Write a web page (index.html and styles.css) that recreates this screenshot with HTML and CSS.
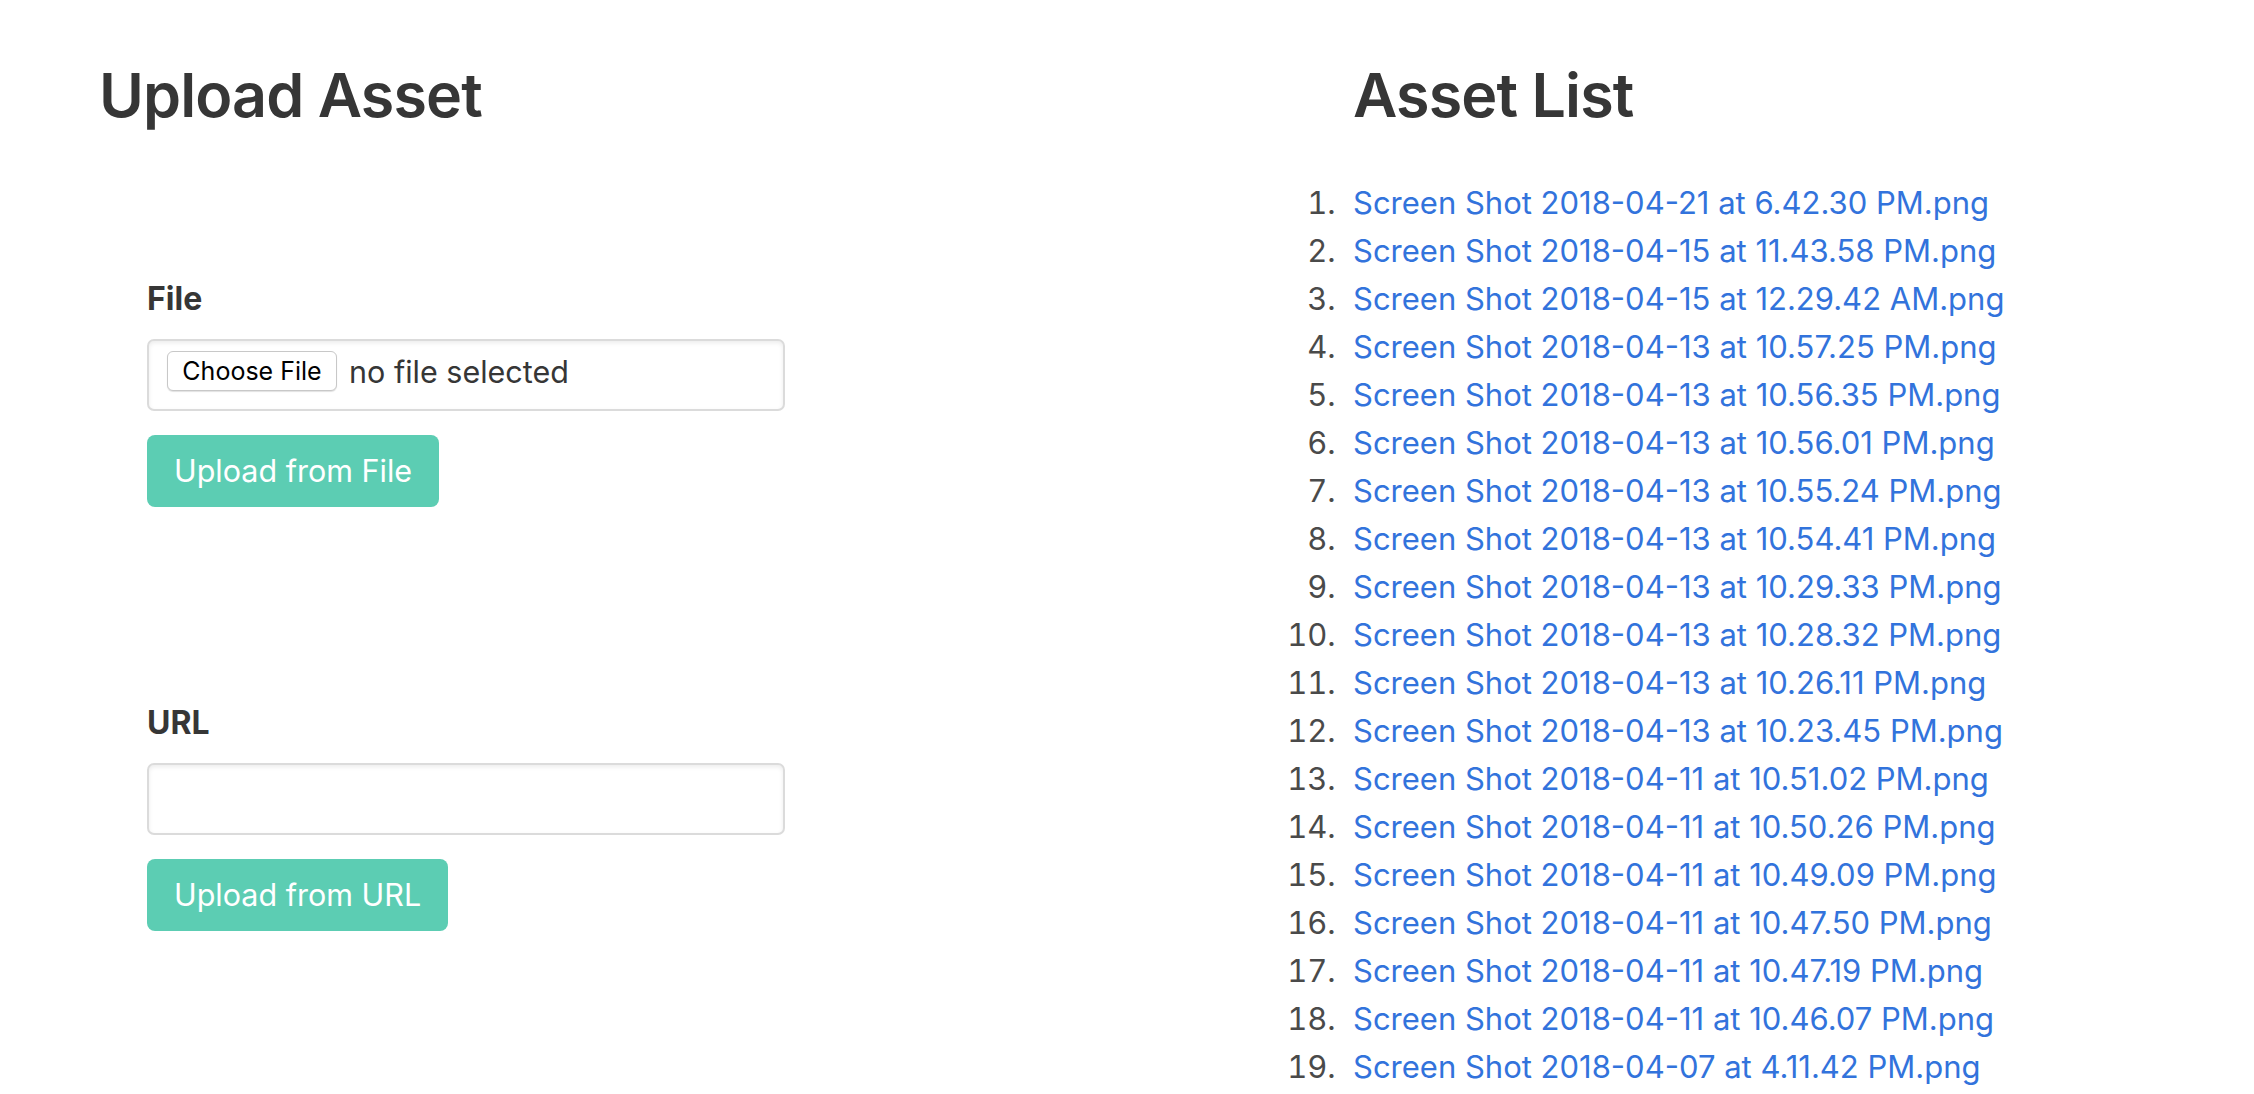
FILE: index.html
```html
<!DOCTYPE html>
<html lang="en">
<head>
<meta charset="utf-8">
<title>Assets</title>
<link rel="stylesheet" href="styles.css">
</head>
<body>
<div class="page">
  <div class="col-left">
    <h1 class="title">Upload Asset</h1>
    <section class="form-section">
      <form>
        <div class="field">
          <label class="label">File</label>
          <div class="file-box"><span class="file-btn">Choose File</span><span class="file-name">no file selected</span></div>
        </div>
        <button type="button" class="btn">Upload from File</button>
      </form>
    </section>
    <section class="form-section">
      <form>
        <div class="field">
          <label class="label">URL</label>
          <input class="input" type="text">
        </div>
        <button type="button" class="btn">Upload from URL</button>
      </form>
    </section>
  </div>
  <div class="col-right">
    <h1 class="title">Asset List</h1>
    <ol class="assets">
      <li><a href="#">Screen Shot 2018-04-21 at 6.42.30 PM.png</a></li>
      <li><a href="#">Screen Shot 2018-04-15 at 11.43.58 PM.png</a></li>
      <li><a href="#">Screen Shot 2018-04-15 at 12.29.42 AM.png</a></li>
      <li><a href="#">Screen Shot 2018-04-13 at 10.57.25 PM.png</a></li>
      <li><a href="#">Screen Shot 2018-04-13 at 10.56.35 PM.png</a></li>
      <li><a href="#">Screen Shot 2018-04-13 at 10.56.01 PM.png</a></li>
      <li><a href="#">Screen Shot 2018-04-13 at 10.55.24 PM.png</a></li>
      <li><a href="#">Screen Shot 2018-04-13 at 10.54.41 PM.png</a></li>
      <li><a href="#">Screen Shot 2018-04-13 at 10.29.33 PM.png</a></li>
      <li><a href="#">Screen Shot 2018-04-13 at 10.28.32 PM.png</a></li>
      <li><a href="#">Screen Shot 2018-04-13 at 10.26.11 PM.png</a></li>
      <li><a href="#">Screen Shot 2018-04-13 at 10.23.45 PM.png</a></li>
      <li><a href="#">Screen Shot 2018-04-11 at 10.51.02 PM.png</a></li>
      <li><a href="#">Screen Shot 2018-04-11 at 10.50.26 PM.png</a></li>
      <li><a href="#">Screen Shot 2018-04-11 at 10.49.09 PM.png</a></li>
      <li><a href="#">Screen Shot 2018-04-11 at 10.47.50 PM.png</a></li>
      <li><a href="#">Screen Shot 2018-04-11 at 10.47.19 PM.png</a></li>
      <li><a href="#">Screen Shot 2018-04-11 at 10.46.07 PM.png</a></li>
      <li><a href="#">Screen Shot 2018-04-07 at 4.11.42 PM.png</a></li>
    </ol>
  </div>
</div>
</body>
</html>
```
FILE: styles.css
```css
html, body {
  margin: 0;
  padding: 0;
  background: #ffffff;
}
body {
  font-family: Inter, "Noto Sans", sans-serif;
  font-size: 31px;
  line-height: 48px;
  color: #4a4a4a;
}
.page {
  display: grid;
  grid-template-columns: 734px 1fr;
  column-gap: 520px;
  padding: 59px 0 0 99px;
}
.title {
  margin: 0 0 48px 0;
  font-size: 61px;
  line-height: 72px;
  font-weight: 600;
  letter-spacing: -0.9px;
  color: #363636;
}
.form-section {
  padding: 96px 48px;
}
.form-section form {
  margin: 0;
}
.field {
  margin-bottom: 24px;
}
.label {
  display: block;
  font-size: 32px;
  font-weight: 700;
  color: #363636;
  margin-bottom: 16px;
}
.file-box,
.input {
  box-sizing: border-box;
  display: flex;
  align-items: center;
  width: 100%;
  height: 72px;
  border: 2px solid #dbdbdb;
  border-radius: 7px;
  box-shadow: inset 0 2px 4px rgba(10, 10, 10, 0.08);
  background: #ffffff;
  padding: 0 18px 6px 18px;
  font-family: inherit;
  font-size: 30.5px;
  color: #363636;
}
.input {
  display: block;
  padding-bottom: 0;
  outline: none;
}
.file-btn {
  box-sizing: border-box;
  display: inline-flex;
  align-items: center;
  justify-content: center;
  height: 40px;
  width: 170px;
  margin-top: -2px;
  border: 1px solid #c8c8c8;
  border-radius: 6px;
  background: #ffffff;
  box-shadow: 0 1px 1px rgba(0, 0, 0, 0.12);
  font-size: 25px;
  line-height: 1;
  color: #000000;
}
.file-name {
  margin-left: 12px;
  color: #363636;
}
.btn {
  box-sizing: border-box;
  height: 72px;
  padding: 0 25px;
  border: 2px solid transparent;
  border-radius: 8px;
  background: #5ccdb3;
  color: #ffffff;
  font-family: inherit;
  font-size: 30.5px;
  line-height: 48px;
  cursor: pointer;
}
.assets {
  margin: 0 0 0 -9px;
  padding: 0;
  list-style: decimal outside;
}
.assets li {
  padding-left: 9px;
}
.assets li::marker {
  color: #4a4a4a;
}
.assets a {
  color: #3273dc;
  text-decoration: none;
}
```
